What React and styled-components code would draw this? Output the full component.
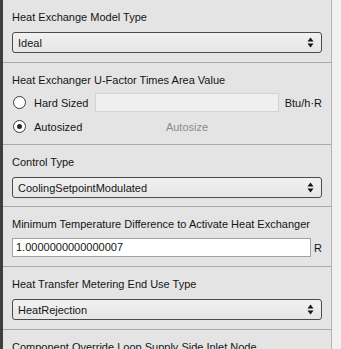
import React from "react";
import styled, { createGlobalStyle } from "styled-components";

const GlobalStyle = createGlobalStyle`
  html, body {
    margin: 0;
    padding: 0;
    background: #e4e4e4;
  }
  body {
    font-family: "Liberation Sans", Arial, sans-serif;
    font-size: 11px;
    color: #151515;
  }
`;

const Shell = styled.div`
  display: flex;
  width: 341px;
  height: 349px;
  overflow: hidden;
`;

const Edge = styled.div`
  width: 3px;
  flex: none;
  background: #3f3f3f;
`;

const Panel = styled.div`
  width: 328px;
  flex: none;
  background: #e4e4e4;
  border-right: 1px solid #b4b4b4;
  display: flex;
  flex-direction: column;
`;

const Scroll = styled.div`
  flex: 1;
  background: #f0f0f0;
`;

const Section = styled.section`
  padding: 9px 8px ${(p) => (p.$bottom ? p.$bottom : 9)}px 9px;
  border-bottom: 1px solid #a9a9a9;
  display: flex;
  flex-direction: column;
  gap: ${(p) => (p.$gap ? p.$gap : 7)}px;
`;

const Label = styled.div`
  height: 16px;
  line-height: 16px;
  white-space: nowrap;
`;

const Select = styled.div`
  height: 19px;
  margin-right: 1px;
  border: 1px solid #4b4b4b;
  border-radius: 3px;
  background: linear-gradient(#f1f1f1, #e6e6e6);
  display: flex;
  align-items: center;
  justify-content: space-between;
  padding: 0 7px 0 5px;
`;

const Arrows = () => (
  <svg width="7" height="11" viewBox="0 0 7 11">
    <path d="M3.5 0.5 L6.5 4.5 L0.5 4.5 Z" fill="#111" />
    <path d="M0.5 6.5 L6.5 6.5 L3.5 10.5 Z" fill="#111" />
  </svg>
);

const Rows = styled.div`
  display: flex;
  flex-direction: column;
  gap: 5px;
`;

const Row = styled.div`
  display: flex;
  align-items: center;
  height: 19px;
`;

const Radio = styled.span`
  width: 11px;
  height: 11px;
  border-radius: 50%;
  border: 1px solid #3a3a3a;
  background: #fff;
  flex: none;
  margin-left: 1px;
  margin-right: 8px;
  display: flex;
  align-items: center;
  justify-content: center;
  &::after {
    content: "";
    width: 5px;
    height: 5px;
    border-radius: 50%;
    background: ${(p) => (p.$checked ? "#2a2a2a" : "transparent")};
  }
`;

const RadioText = styled.span`
  width: 61px;
  flex: none;
`;

const Field = styled.div`
  width: 182px;
  height: 17px;
  flex: none;
  background: ${(p) => (p.$plain ? "transparent" : "#efefef")};
  border: 1px solid ${(p) => (p.$plain ? "transparent" : "#d2d2d2")};
  color: #8c8c8c;
  display: flex;
  align-items: center;
  justify-content: center;
`;

const Unit = styled.span`
  margin-left: auto;
  margin-right: 1px;
`;

const InputRow = styled.div`
  display: flex;
  align-items: center;
  height: 19px;
`;

const NumberBox = styled.div`
  width: 294px;
  height: 17px;
  background: #fff;
  border: 1px solid #a2a2a2;
  padding-left: 3px;
  line-height: 17px;
  box-sizing: content-box;
`;

const dropdowns = {
  model: "Ideal",
  control: "CoolingSetpointModulated",
  metering: "HeatRejection",
};

export default function App() {
  return (
    <>
      <GlobalStyle />
      <Shell>
        <Edge />
        <Panel>
          <Section>
            <Label>Heat Exchange Model Type</Label>
            <Select>
              <span>{dropdowns.model}</span>
              <Arrows />
            </Select>
          </Section>

          <Section $gap={5} $bottom={8}>
            <Label>Heat Exchanger U-Factor Times Area Value</Label>
            <Rows>
              <Row>
                <Radio />
                <RadioText>Hard Sized</RadioText>
                <Field />
                <Unit>Btu/h·R</Unit>
              </Row>
              <Row>
                <Radio $checked />
                <RadioText>Autosized</RadioText>
                <Field $plain>Autosize</Field>
              </Row>
            </Rows>
          </Section>

          <Section $bottom={8}>
            <Label>Control Type</Label>
            <Select>
              <span>{dropdowns.control}</span>
              <Arrows />
            </Select>
          </Section>

          <Section $gap={6}>
            <Label>Minimum Temperature Difference to Activate Heat Exchanger</Label>
            <InputRow>
              <NumberBox>1.0000000000000007</NumberBox>
              <Unit>R</Unit>
            </InputRow>
          </Section>

          <Section>
            <Label>Heat Transfer Metering End Use Type</Label>
            <Select>
              <span>{dropdowns.metering}</span>
              <Arrows />
            </Select>
          </Section>

          <Section>
            <Label>Component Override Loop Supply Side Inlet Node</Label>
          </Section>
        </Panel>
        <Scroll />
      </Shell>
    </>
  );
}
